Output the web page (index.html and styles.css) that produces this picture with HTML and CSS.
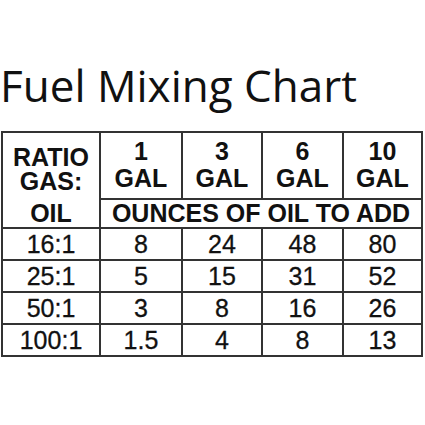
FILE: index.html
```html
<!DOCTYPE html>
<html lang="en">
<head>
  <meta charset="UTF-8">
  <title>Fuel Mixing Chart</title>
  <link rel="stylesheet" href="styles.css">
</head>
<body>
  <div class="chart">
    <h1 class="title">Fuel Mixing Chart</h1>
    <table class="mix">
      <tr class="head">
        <td class="ratio-top"><div>RATIO</div><div>GAS:</div></td>
        <td>1<br>GAL</td>
        <td>3<br>GAL</td>
        <td>6<br>GAL</td>
        <td>10<br>GAL</td>
      </tr>
      <tr class="sub">
        <td class="ratio-bottom">OIL</td>
        <td colspan="4">OUNCES OF OIL TO ADD</td>
      </tr>
      <tr><td>16:1</td><td>8</td><td>24</td><td>48</td><td>80</td></tr>
      <tr><td>25:1</td><td>5</td><td>15</td><td>31</td><td>52</td></tr>
      <tr><td>50:1</td><td>3</td><td>8</td><td>16</td><td>26</td></tr>
      <tr><td>100:1</td><td>1.5</td><td>4</td><td>8</td><td>13</td></tr>
    </table>
  </div>
</body>
</html>
```

FILE: styles.css
```css
*{margin: 0;padding: 0;}
body {
  background: #fff;
  color: #111;
}
.chart {
  width: 425px;
  padding-top: 55px;
}
.title {
  font-family: "Open Sans", sans-serif;
  font-weight: normal;
  font-size: 44px;
  line-height: 60px;
  height: 76px;
  color: #111;
}
.mix {
  margin-left: 1px;
  width: 422px;
  border-collapse: collapse;
  border: 2px solid #333;
  font-family: "Liberation Sans", Arial, sans-serif;
  font-size: 25px;
  text-align: center;
  color: #111;
}
.mix td {
  border: 2px solid #333;
  padding: 0;
  height: 30px;
  line-height: 30px;
  -webkit-text-stroke: 0.3px #111;
}
.mix td:nth-child(1) { width: 96px; }
.mix td:nth-child(2) { width: 80px; }
.mix td:nth-child(3) { width: 78px; }
.mix td:nth-child(4) { width: 79px; }
.head td {
  font-weight: bold;
  height: 60px;
  line-height: 27px;
  padding-bottom: 2px;
  -webkit-text-stroke: 0;
}
.sub td {
  font-weight: bold;
  height: 27px;
  line-height: 27px;
  -webkit-text-stroke: 0;
}
.head .ratio-top {
  border-bottom-style: hidden;
  line-height: 24px;
  padding: 6px 0 0;
}
.sub .ratio-bottom {
  border-top-style: hidden;
}
```
